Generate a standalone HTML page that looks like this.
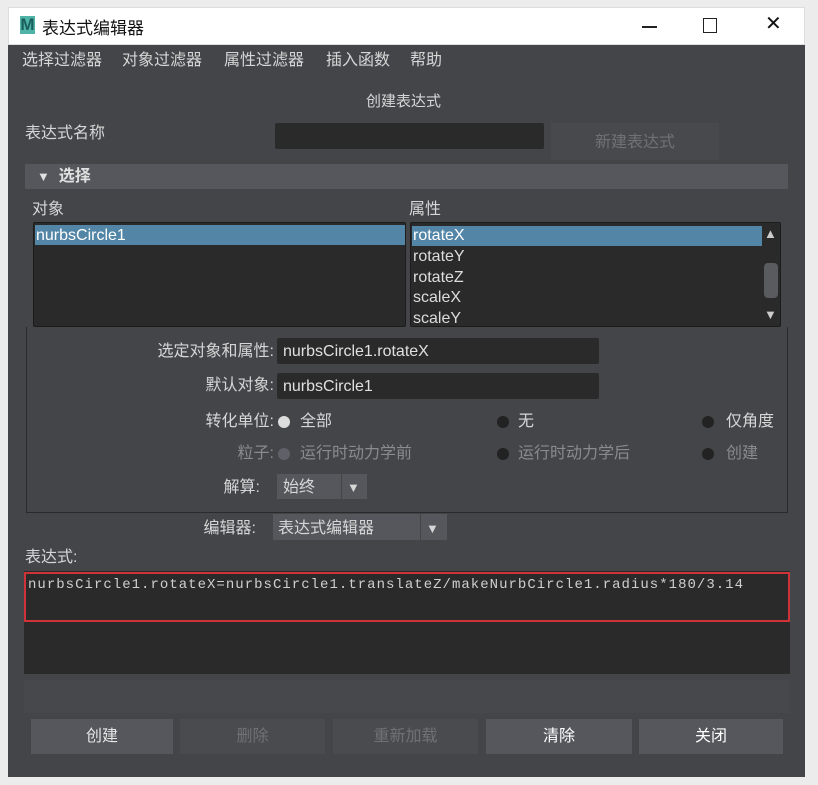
<!DOCTYPE html>
<html><head><meta charset="utf-8"><style>
*{margin:0;padding:0;box-sizing:border-box}
body{width:818px;height:785px;background:#ececec;position:relative;overflow:hidden;font-family:"Liberation Sans","Noto Sans CJK SC",sans-serif;font-size:16px;color:#d6d6d6}
.a{position:absolute;white-space:nowrap}
.win{position:absolute;left:8px;top:7px;width:797px;height:770px;background:#444549}
.title{position:absolute;left:8px;top:7px;width:797px;height:38px;background:#fff;color:#111;border:1px solid #ddd}
.inp{position:absolute;background:#2a2a2b;border-radius:2px}
.lab{position:absolute;white-space:nowrap;line-height:20px}
.r{text-align:right}
.rad{position:absolute;width:12px;height:12px;border-radius:50%;background:#222}
.btn{position:absolute;top:719px;height:35px;text-align:center;line-height:35px;font-size:16px}
</style></head><body>
<div class="win"></div>
<div class="title">
 <div class="a" style="left:11px;top:8px;width:15px;height:18px;background:#4fb3a8;color:#1a5f5a;font-weight:bold;font-size:17px;line-height:18px;text-align:center">M</div>
 <div class="a" style="left:33px;top:6px;font-size:17px">表达式编辑器</div>
 <div class="a" style="left:633px;top:18px;width:15px;height:1.5px;background:#222"></div>
 <div class="a" style="left:694px;top:10px;width:14px;height:15px;border:1.5px solid #222"></div>
 <div class="a" style="left:756px;top:3px;font-size:20px;font-weight:300">✕</div>
</div>
<div class="lab" style="left:22px;top:51px">选择过滤器</div>
<div class="lab" style="left:122px;top:51px">对象过滤器</div>
<div class="lab" style="left:224px;top:51px">属性过滤器</div>
<div class="lab" style="left:326px;top:51px">插入函数</div>
<div class="lab" style="left:410px;top:51px">帮助</div>
<div class="lab" style="left:366px;top:92px;font-size:15px">创建表达式</div>
<div class="lab" style="left:25px;top:124px">表达式名称</div>
<div class="inp" style="left:275px;top:123px;width:269px;height:26px"></div>
<div class="a" style="left:551px;top:123px;width:168px;height:37px;background:#48494d;color:#707174;text-align:center;line-height:40px">新建表达式</div>
<div class="a" style="left:25px;top:164px;width:763px;height:25px;background:#55575d;font-weight:bold;line-height:25px;padding-left:12px;color:#e0e0e0"><span style="font-size:13px">▼</span>&nbsp; 选择</div>
<div class="lab" style="left:32px;top:200px">对象</div>
<div class="lab" style="left:409px;top:200px">属性</div>
<div class="inp" style="left:33px;top:222px;width:373px;height:105px;border:1px solid #1c1c1c"></div>
<div class="a" style="left:35px;top:225px;width:370px;height:20px;background:#5285a6;color:#fff;line-height:21px;padding-left:1px">nurbsCircle1</div>
<div class="inp" style="left:410px;top:222px;width:371px;height:105px;border:1px solid #1c1c1c;overflow:hidden">
 <div style="position:absolute;left:1px;top:3px;width:350px;height:20px;background:#5285a6"></div>
 <div style="position:absolute;left:2px;top:3px;line-height:20.8px;color:#ddd"><span style="color:#fff">rotateX</span><br>rotateY<br>rotateZ<br>scaleX<br>scaleY</div>
 <div style="position:absolute;left:353px;top:3px;font-size:13px;color:#ccc">▲</div>
 <div style="position:absolute;left:353px;top:40px;width:14px;height:35px;background:#5a5b5f;border-radius:4px"></div>
 <div style="position:absolute;left:353px;top:84px;font-size:13px;color:#ccc">▼</div>
</div>
<div class="a" style="left:26px;top:327px;width:762px;height:186px;border:1px solid #2a2a2c;border-top:none"></div>
<div class="lab r" style="left:100px;width:174px;top:342px">选定对象和属性:</div>
<div class="inp" style="left:277px;top:338px;width:322px;height:26px;padding-left:6px;line-height:27px;color:#e0e0e0">nurbsCircle1.rotateX</div>
<div class="lab r" style="left:100px;width:174px;top:376px">默认对象:</div>
<div class="inp" style="left:277px;top:373px;width:322px;height:26px;padding-left:6px;line-height:27px;color:#e0e0e0">nurbsCircle1</div>
<div class="lab r" style="left:100px;width:174px;top:412px">转化单位:</div>
<div class="rad" style="left:278px;top:416px;background:#ddd"></div><div class="lab" style="left:300px;top:412px">全部</div>
<div class="rad" style="left:497px;top:416px"></div><div class="lab" style="left:518px;top:412px">无</div>
<div class="rad" style="left:702px;top:416px"></div><div class="lab" style="left:726px;top:412px">仅角度</div>
<div class="lab r" style="left:100px;width:174px;top:444px;color:#8a8b8e">粒子:</div>
<div class="rad" style="left:278px;top:448px;background:#5f6068"></div><div class="lab" style="left:300px;top:444px;color:#8a8b8e">运行时动力学前</div>
<div class="rad" style="left:497px;top:448px"></div><div class="lab" style="left:518px;top:444px;color:#8a8b8e">运行时动力学后</div>
<div class="rad" style="left:702px;top:448px"></div><div class="lab" style="left:726px;top:444px;color:#8a8b8e">创建</div>
<div class="lab r" style="left:100px;width:160px;top:478px">解算:</div>
<div class="a" style="left:277px;top:474px;width:90px;height:25px;background:#55575c;line-height:27px;padding-left:6px">始终<span style="position:absolute;left:64px;top:0;width:1px;height:25px;background:#444"></span><span style="position:absolute;left:70px;font-size:13px">▼</span></div>
<div class="lab r" style="left:100px;width:156px;top:519px">编辑器:</div>
<div class="a" style="left:273px;top:514px;width:174px;height:26px;background:#55575c;line-height:29px;padding-left:5px">表达式编辑器<span style="position:absolute;left:147px;top:0;width:1px;height:26px;background:#444"></span><span style="position:absolute;left:153px;font-size:13px">▼</span></div>
<div class="lab" style="left:25px;top:548px">表达式:</div>
<div class="a" style="left:24px;top:571px;width:766px;height:103px;background:#2a2a2b"></div>
<div class="a" style="left:24px;top:572px;width:766px;height:50px;border:2px solid #d0323a"></div>
<div class="a" style="left:28px;top:577px;font-family:'Liberation Mono',monospace;font-size:14px;letter-spacing:1.02px;color:#cfcfcf">nurbsCircle1.rotateX=nurbsCircle1.translateZ/makeNurbCircle1.radius*180/3.14</div>
<div class="a" style="left:24px;top:680px;width:766px;height:33px;background:#47484c"></div>
<div class="btn" style="left:31px;width:142px;background:#55575c;color:#e6e6e6">创建</div>
<div class="btn" style="left:180px;width:145px;background:#4a4b4f;color:#707174">删除</div>
<div class="btn" style="left:333px;width:145px;background:#4a4b4f;color:#707174">重新加载</div>
<div class="btn" style="left:486px;width:146px;background:#55575c;color:#fff">清除</div>
<div class="btn" style="left:639px;width:144px;background:#55575c;color:#fff">关闭</div>
</body></html>
